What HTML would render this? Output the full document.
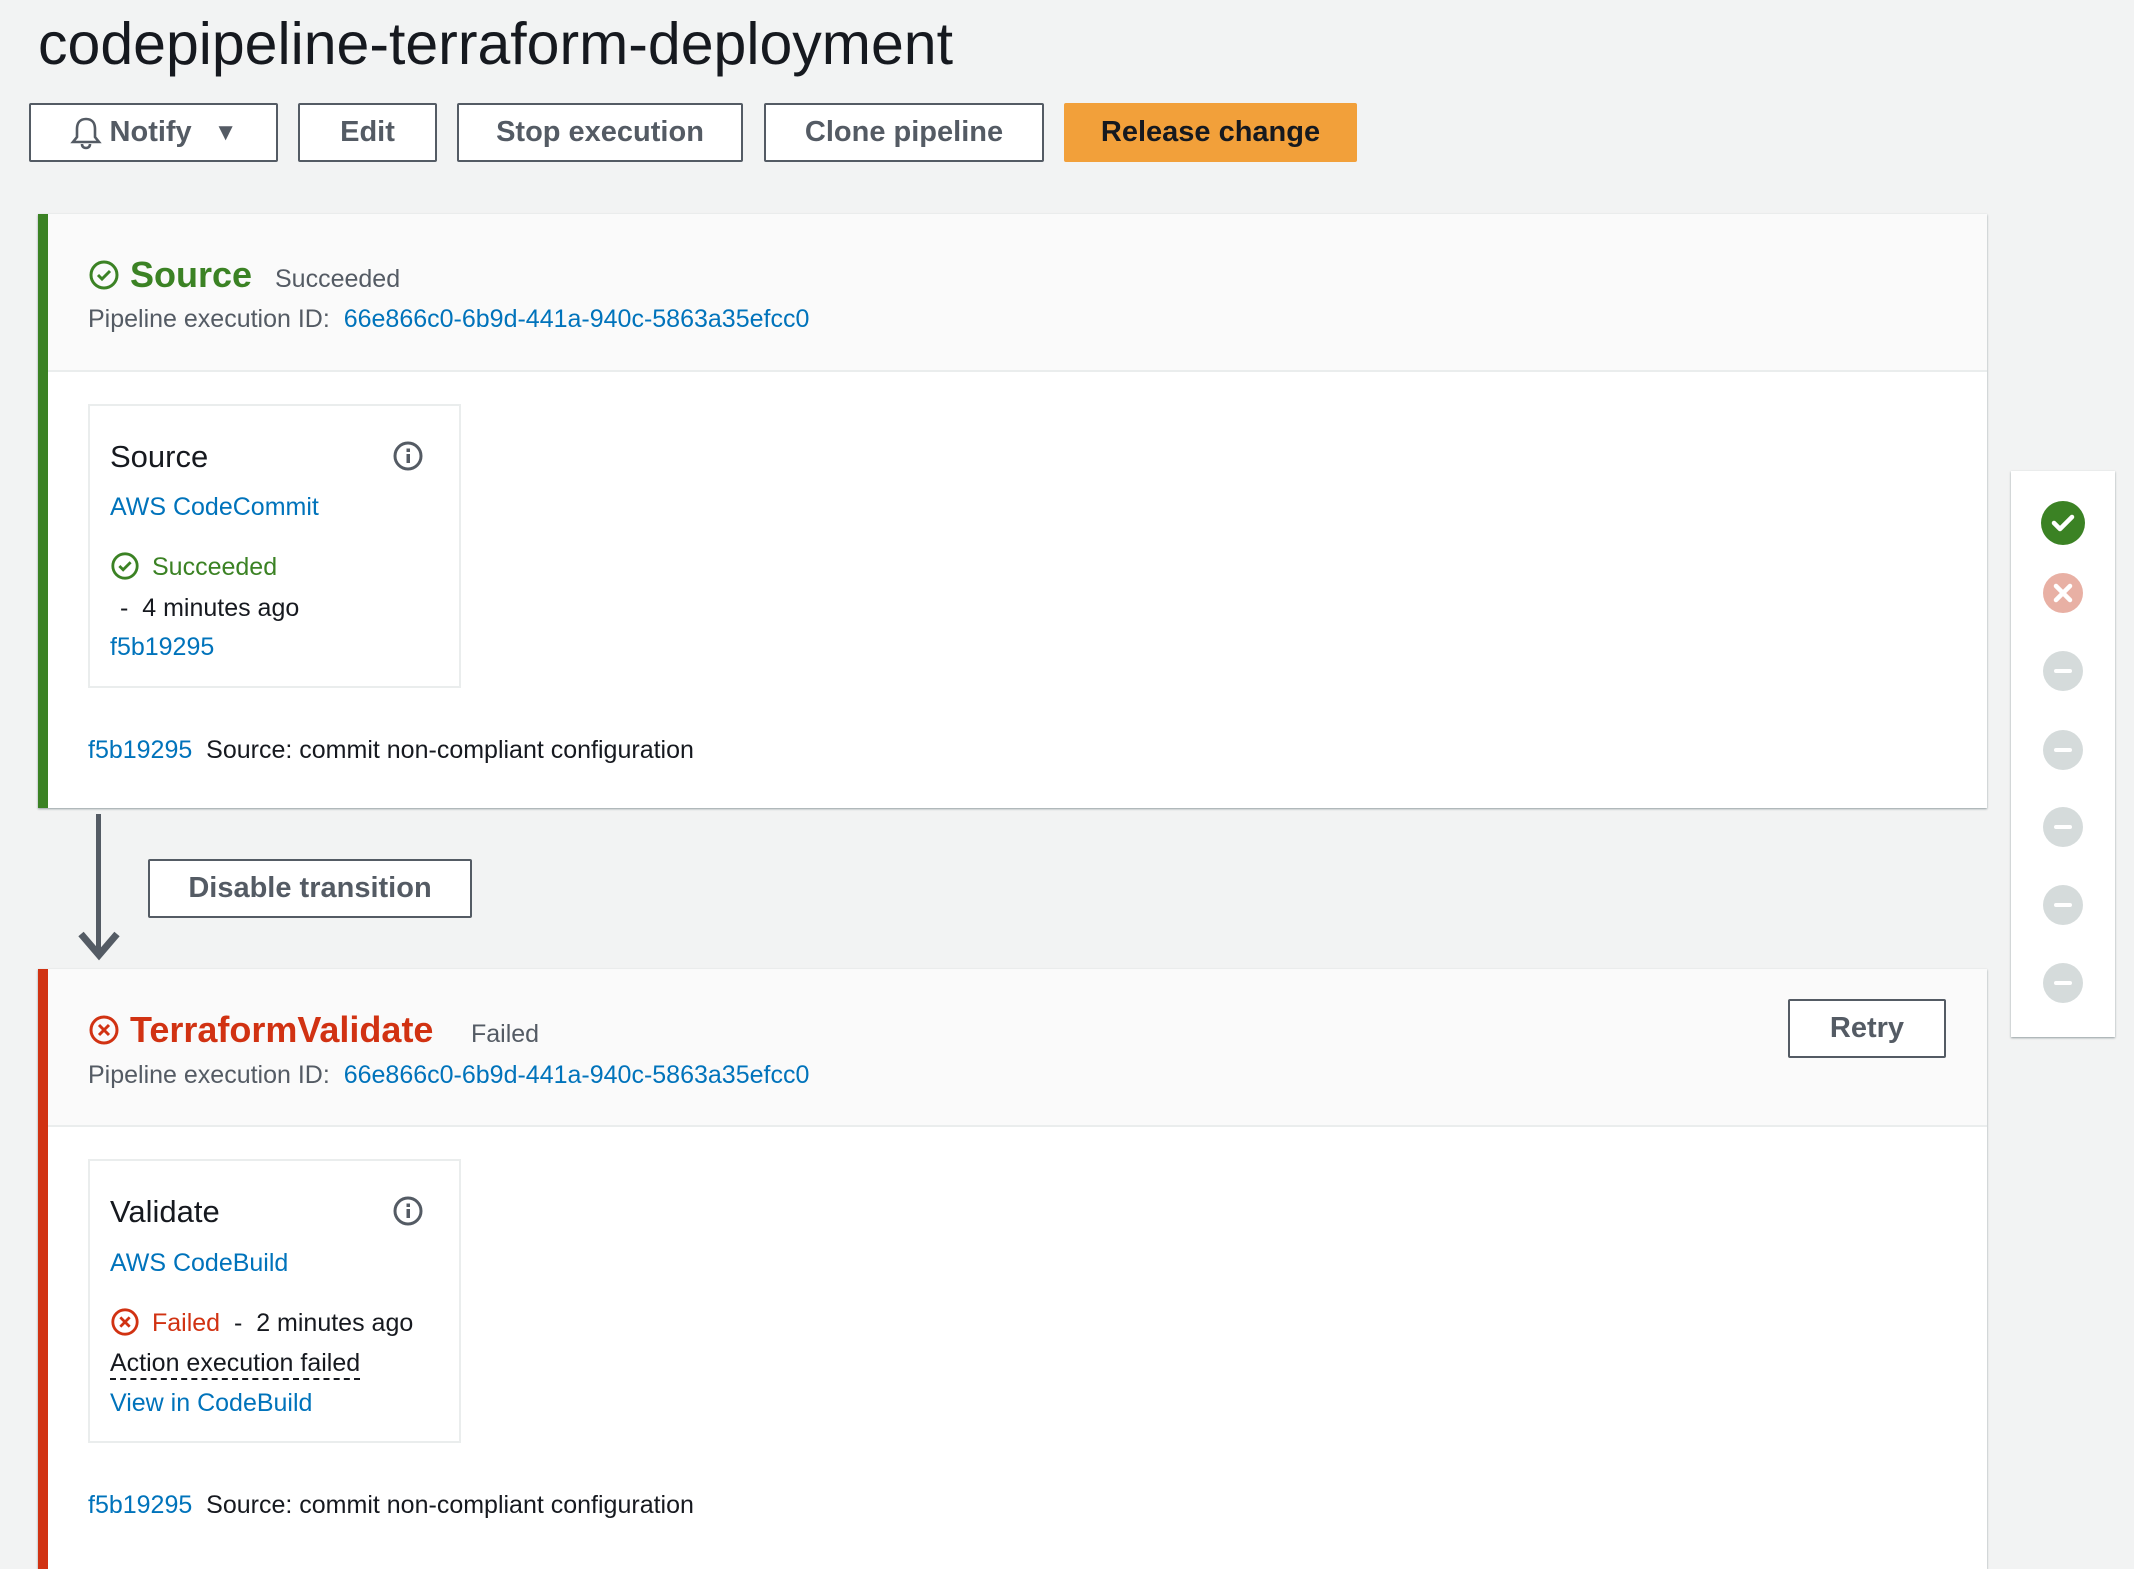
<!DOCTYPE html>
<html><head><meta charset="utf-8"><style>
*{margin:0;padding:0;box-sizing:border-box}
body{width:2134px;height:1540px;background:#f2f3f3;font-family:"Liberation Sans",sans-serif;color:#16191f;position:relative;overflow:hidden}
.a{position:absolute;white-space:nowrap}
.t{font-size:25px;line-height:30px}
.btn{position:absolute;border:2px solid #545b64;border-radius:2px;background:#fff;color:#545b64;font-weight:bold;font-size:29px;display:flex;align-items:center;justify-content:center}
.card{position:absolute;background:#fff;box-shadow:0 1px 2px rgba(0,28,36,.4)}
.hdr{position:absolute;left:0;right:0;top:0;background:#fafafa;border-bottom:2px solid #eaeded}
.link{color:#0073bb}
.box{position:absolute;border:2px solid #eaeded;background:#fff}
.dot{position:absolute;width:40px;height:40px;border-radius:50%;background:#d5dbdb}
.dot::after{content:"";position:absolute;left:11px;top:18px;width:18px;height:4px;background:#fff;border-radius:2px}
</style></head><body>
<div class="a" style="left:38px;top:9px;font-size:59px;line-height:70px">codepipeline-terraform-deployment</div>

<div class="btn" style="left:29px;top:103px;width:249px;height:59px"><svg width="32" height="34" viewBox="0 0 32 34" style="margin-right:8px"><path d="M16 3c-6 0-9 4-9 10v8l-4 5h26l-4-5v-8c0-6-3-10-9-10z M12 28c0 3 2 4 4 4s4-1 4-4" fill="none" stroke="#545b64" stroke-width="2.6"/></svg>Notify<span style="margin-left:22px;font-size:24px">▼</span></div>
<div class="btn" style="left:298px;top:103px;width:139px;height:59px">Edit</div>
<div class="btn" style="left:457px;top:103px;width:286px;height:59px">Stop execution</div>
<div class="btn" style="left:764px;top:103px;width:280px;height:59px">Clone pipeline</div>
<div class="btn" style="left:1064px;top:103px;width:293px;height:59px;background:#f2a03a;border-color:#f2a03a;color:#16191f">Release change</div>

<!-- Stage 1 -->
<div class="card" style="left:38px;top:214px;width:1949px;height:594px;border-left:10px solid #3b8224">
  <div class="hdr" style="height:158px"></div>
</div>
<svg class="a" style="left:88px;top:259px" width="32" height="32" viewBox="0 0 32 32"><circle cx="16" cy="16" r="13" fill="none" stroke="#3b8224" stroke-width="3"/><path d="M10 16l4 4 8-8" fill="none" stroke="#3b8224" stroke-width="3"/></svg>
<div class="a" style="left:130px;top:253px;font-size:36px;line-height:44px;font-weight:bold;color:#3b8224">Source</div>
<div class="a t" style="left:275px;top:264px;color:#545b64">Succeeded</div>
<div class="a t" style="left:88px;top:304px;color:#545b64">Pipeline execution ID:&nbsp; <span class="link">66e866c0-6b9d-441a-940c-5863a35efcc0</span></div>

<div class="box" style="left:88px;top:404px;width:373px;height:284px"></div>
<div class="a" style="left:110px;top:439px;font-size:31px;line-height:36px">Source</div>
<svg class="a" style="left:392px;top:440px" width="32" height="32" viewBox="0 0 32 32"><circle cx="16" cy="16" r="13" fill="none" stroke="#545b64" stroke-width="3"/><rect x="14.5" y="14" width="3.5" height="9" fill="#545b64"/><rect x="14.5" y="8.5" width="3.5" height="3.5" fill="#545b64"/></svg>
<div class="a link t" style="left:110px;top:492px">AWS CodeCommit</div>
<svg class="a" style="left:110px;top:551px" width="30" height="30" viewBox="0 0 32 32"><circle cx="16" cy="16" r="13" fill="none" stroke="#3b8224" stroke-width="3"/><path d="M10 16l4 4 8-8" fill="none" stroke="#3b8224" stroke-width="3"/></svg>
<div class="a t" style="left:152px;top:552px;color:#3b8224">Succeeded</div>
<div class="a t" style="left:120px;top:593px">-&nbsp; 4 minutes ago</div>
<div class="a link t" style="left:110px;top:632px">f5b19295</div>
<div class="a t" style="left:88px;top:735px"><span class="link">f5b19295</span>&nbsp; Source: commit non-compliant configuration</div>

<!-- arrow -->
<div class="a" style="left:96px;top:814px;width:5px;height:140px;background:#545b64"></div>
<svg class="a" style="left:77px;top:925px" width="44" height="36" viewBox="0 0 44 36"><path d="M4 9l18 21 18-21" fill="none" stroke="#545b64" stroke-width="7"/></svg>
<div class="btn" style="left:148px;top:859px;width:324px;height:59px">Disable transition</div>

<!-- Stage 2 -->
<div class="card" style="left:38px;top:969px;width:1949px;height:600px;border-left:10px solid #d13212">
  <div class="hdr" style="height:158px"></div>
</div>
<svg class="a" style="left:88px;top:1014px" width="32" height="32" viewBox="0 0 32 32"><circle cx="16" cy="16" r="13" fill="none" stroke="#d13212" stroke-width="3"/><path d="M11 11l10 10M21 11l-10 10" stroke="#d13212" stroke-width="3"/></svg>
<div class="a" style="left:130px;top:1008px;font-size:36px;line-height:44px;font-weight:bold;color:#d13212">TerraformValidate</div>
<div class="a t" style="left:471px;top:1019px;color:#545b64">Failed</div>
<div class="a t" style="left:88px;top:1060px;color:#545b64">Pipeline execution ID:&nbsp; <span class="link">66e866c0-6b9d-441a-940c-5863a35efcc0</span></div>
<div class="btn" style="left:1788px;top:999px;width:158px;height:59px">Retry</div>

<div class="box" style="left:88px;top:1159px;width:373px;height:284px"></div>
<div class="a" style="left:110px;top:1194px;font-size:31px;line-height:36px">Validate</div>
<svg class="a" style="left:392px;top:1195px" width="32" height="32" viewBox="0 0 32 32"><circle cx="16" cy="16" r="13" fill="none" stroke="#545b64" stroke-width="3"/><rect x="14.5" y="14" width="3.5" height="9" fill="#545b64"/><rect x="14.5" y="8.5" width="3.5" height="3.5" fill="#545b64"/></svg>
<div class="a link t" style="left:110px;top:1248px">AWS CodeBuild</div>
<svg class="a" style="left:110px;top:1307px" width="30" height="30" viewBox="0 0 32 32"><circle cx="16" cy="16" r="13" fill="none" stroke="#d13212" stroke-width="3"/><path d="M11 11l10 10M21 11l-10 10" stroke="#d13212" stroke-width="3"/></svg>
<div class="a t" style="left:152px;top:1308px"><span style="color:#d13212">Failed</span>&nbsp; -&nbsp; 2 minutes ago</div>
<div class="a t" style="left:110px;top:1348px;border-bottom:2px dashed #16191f">Action execution failed</div>
<div class="a link t" style="left:110px;top:1388px">View in CodeBuild</div>
<div class="a t" style="left:88px;top:1490px"><span class="link">f5b19295</span>&nbsp; Source: commit non-compliant configuration</div>

<!-- right panel -->
<div class="card" style="left:2011px;top:471px;width:104px;height:566px"></div>
<div class="a" style="left:2041px;top:501px;width:44px;height:44px;border-radius:50%;background:#3b8224"><svg width="44" height="44" viewBox="0 0 44 44"><path d="M13 22l6 6 12-12" fill="none" stroke="#fff" stroke-width="4.5" stroke-linecap="round" stroke-linejoin="round"/></svg></div>
<div class="a" style="left:2043px;top:573px;width:40px;height:40px;border-radius:50%;background:#e8b0a4"><svg width="40" height="40" viewBox="0 0 40 40"><path d="M13 13l14 14M27 13l-14 14" stroke="#fff" stroke-width="4.5" stroke-linecap="round"/></svg></div>
<div class="dot" style="top:651px;left:2043px"></div>
<div class="dot" style="top:730px;left:2043px"></div>
<div class="dot" style="top:807px;left:2043px"></div>
<div class="dot" style="top:885px;left:2043px"></div>
<div class="dot" style="top:963px;left:2043px"></div>
</body></html>
